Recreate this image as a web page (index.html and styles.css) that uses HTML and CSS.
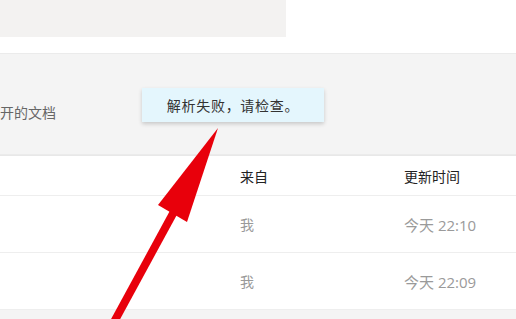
FILE: index.html
```html
<!DOCTYPE html>
<html lang="zh-CN">
<head>
  <meta charset="UTF-8" />
  <meta name="viewport" content="width=device-width, initial-scale=1.0"/>
  <title>文档</title>
  <link rel="stylesheet" href="styles.css">
</head>
<body>

  <div class="top">
    <div class="search-box"></div>
  </div>

  <div class="bar">
    <span class="bar-title">开的文档</span>
  </div>

  <div class="file-table">
    <div class="row head">
      <div class="col-from">来自</div>
      <div class="col-time">更新时间</div>
    </div>
    <div class="row">
      <div class="col-from">我</div>
      <div class="col-time">今天 22:10</div>
    </div>
    <div class="row">
      <div class="col-from">我</div>
      <div class="col-time">今天 22:09</div>
    </div>
  </div>

  <div class="footer-band"></div>

  <!-- toast message -->
  <div class="toast">解析失败，请检查。</div>

  <!-- red arrow annotation -->
  <svg class="arrow" width="516" height="319" viewBox="0 0 516 319">
    <line x1="114" y1="322" x2="176" y2="208" stroke="#e8000b" stroke-width="8" />
    <polygon points="218,128 158,205 187,222" fill="#e8000b" />
  </svg>

</body>
</html>
```

FILE: styles.css
```css
body {
  margin: 0;
  font-family: "Noto Sans CJK SC", "Open Sans", sans-serif;
  font-size: 14px;
  background: #ffffff;
  width: 516px;
  height: 319px;
  overflow: hidden;
  position: relative;
}

.top {
  height: 53px;
  background: #ffffff;
}

.search-box {
  width: 286px;
  height: 37px;
  background: #f3f2f1;
}

.bar {
  height: 102px;
  background: #f4f4f4;
  border-top: 1px solid #ebebeb;
  border-bottom: 1px solid #ebebeb;
  display: flex;
  align-items: center;
  padding-top: 16px;
  box-sizing: border-box;
}

.bar-title {
  color: #666;
}

.file-table {
  background: #ffffff;
}

.row {
  display: flex;
  align-items: center;
  height: 56px;
  border-bottom: 1px solid #eeeeee;
  color: #9a9a9a;
}

.row.head {
  height: 39px;
  color: #222;
  border-top: 1px solid #e8e8e8;
}

.col-from {
  margin-left: 240px;
  width: 164px;
}

.col-time {
  font-family: "Open Sans", "Noto Sans CJK SC", sans-serif;
  font-size: 15px;
}

.row.head .col-time {
  font-family: "Noto Sans CJK SC", sans-serif;
  font-size: 14px;
}

.footer-band {
  height: 20px;
  background: #f4f4f4;
}

.toast {
  position: absolute;
  left: 142px;
  top: 88px;
  width: 182px;
  height: 34px;
  background: #e4f6fd;
  color: #333;
  letter-spacing: 0.7px;
  display: flex;
  align-items: center;
  justify-content: center;
  box-shadow: 0 2px 4px rgba(0,0,0,0.18);
}

.arrow {
  position: absolute;
  left: 0;
  top: 0;
}
```
